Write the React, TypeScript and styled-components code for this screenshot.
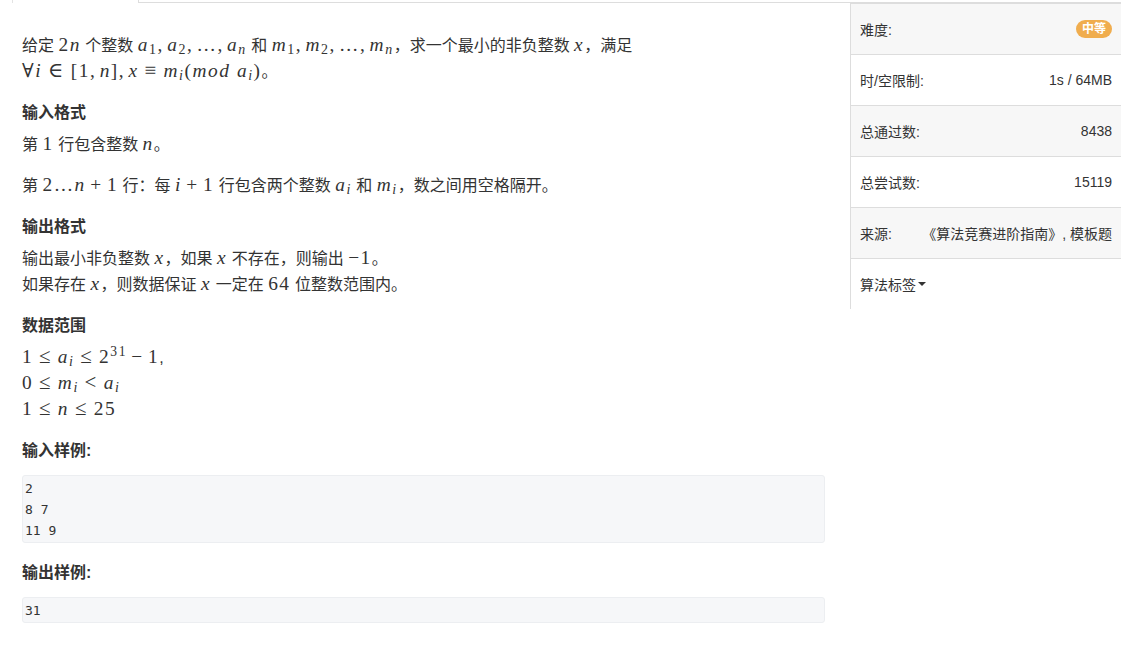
import styled, { createGlobalStyle } from "styled-components";

const GlobalStyle = createGlobalStyle`
  body {
    margin: 0;
    background: #fff;
    color: #333;
    font-family: "Liberation Sans", "Noto Sans CJK SC", sans-serif;
  }
`;

const Page = styled.div`
  display: flex;
  align-items: flex-start;
  width: 1129px;
`;

const Main = styled.main`
  width: 850px;
  flex-shrink: 0;
`;

const TabBar = styled.div`
  display: flex;
  height: 3px;
  padding-left: 12px;
`;

const ActiveTab = styled.div`
  width: 125px;
  height: 3px;
  border-left: 1px solid #e3e3e3;
  border-right: 1px solid #ddd;
`;

const TabLine = styled.div`
  flex: 1;
  height: 2px;
  border-bottom: 1px solid #ddd;
`;

const Content = styled.div`
  padding: 30px 25px 20px 22px;
  font-size: 16px;
  line-height: 26px;
`;

const Para = styled.p`
  margin: 0 0 15px;
`;

const Heading = styled.h4<{ $gap?: number }>`
  margin: 0 0 ${({ $gap }) => $gap ?? 6}px;
  font-size: 16px;
  font-weight: 700;
  line-height: 26px;
`;

const Sample = styled.pre`
  margin: 0 0 17px;
  padding: 2px 2px 1px;
  border: 1px solid #eceef1;
  border-radius: 3px;
  background: #f6f7f9;
  color: #333;
  font-family: "DejaVu Sans Mono", "Liberation Mono", monospace;
  font-size: 13px;
  line-height: 21px;
  white-space: pre;
`;

// math (stands in for KaTeX)
const M = styled.span`
  font-family: "Liberation Serif", "DejaVu Serif", serif;
  font-size: 1.21em;
  line-height: 1;
  letter-spacing: 0.08em;
  white-space: nowrap;
`;

const V = styled.i`
  font-style: italic;
`;

const Sub = styled.sub`
  font-size: 0.72em;
  line-height: 0;
  vertical-align: -0.22em;
`;

const Sup = styled.sup`
  font-size: 0.7em;
  line-height: 0;
  vertical-align: 0.5em;
`;

const Rel = styled.span`
  margin: 0 0.2778em;
  font-size: 1.08em;
`;

const Bin = styled.span`
  margin: 0 0.2222em;
`;

const Punct = styled.span`
  margin-right: 0.1667em;
`;

const Sidebar = styled.aside`
  width: 270px;
  flex-shrink: 0;
  margin-top: 2px;
  border-top: 2px solid #ddd;
  border-left: 1px solid #ddd;
  font-size: 14px;
  color: #333;
`;

const InfoRow = styled.div<{ $shade?: boolean }>`
  display: flex;
  align-items: center;
  justify-content: space-between;
  height: 50px;
  padding: 0 9px;
  background: ${({ $shade }) => ($shade ? "#f7f7f7" : "#fff")};

  & + & {
    border-top: 1px solid #ddd;
  }
`;

const Badge = styled.span`
  padding: 0 6px;
  border-radius: 9px;
  background: #f0ad4e;
  color: #fff;
  font-size: 12px;
  font-weight: 700;
  line-height: 18px;
`;

const TagToggle = styled.span`
  display: inline-flex;
  align-items: center;
  cursor: pointer;
`;

const Caret = styled.span`
  display: inline-block;
  width: 0;
  height: 0;
  margin-left: 2px;
  border-top: 4px solid #333;
  border-left: 4px solid transparent;
  border-right: 4px solid transparent;
`;

const Ai = () => (
  <>
    <V>a</V>
    <Sub>
      <V>i</V>
    </Sub>
  </>
);

const Mi = () => (
  <>
    <V>m</V>
    <Sub>
      <V>i</V>
    </Sub>
  </>
);

export default function App() {
  return (
    <Page>
      <GlobalStyle />
      <Main>
        <TabBar>
          <ActiveTab />
          <TabLine />
        </TabBar>

        <Content>
          <Para>
            给定 <M>2<V>n</V></M> 个整数{" "}
            <M>
              <V>a</V>
              <Sub>1</Sub>
              <Punct>,</Punct>
              <V>a</V>
              <Sub>2</Sub>
              <Punct>,</Punct>…<Punct>,</Punct>
              <V>a</V>
              <Sub>
                <V>n</V>
              </Sub>
            </M>{" "}
            和{" "}
            <M>
              <V>m</V>
              <Sub>1</Sub>
              <Punct>,</Punct>
              <V>m</V>
              <Sub>2</Sub>
              <Punct>,</Punct>…<Punct>,</Punct>
              <V>m</V>
              <Sub>
                <V>n</V>
              </Sub>
            </M>
            ，求一个最小的非负整数 <M><V>x</V></M>，满足
            <br />
            <M>
              ∀<V>i</V>
              <Rel>∈</Rel>[1<Punct>,</Punct>
              <V>n</V>]<Punct>,</Punct>
              <V>x</V>
              <Rel>≡</Rel>
              <Mi />(<V>mod</V> <Ai />)
            </M>
            。
          </Para>

          <Heading>输入格式</Heading>
          <Para>
            第 <M>1</M> 行包含整数 <M><V>n</V></M>。
          </Para>
          <Para>
            第{" "}
            <M>
              2…<V>n</V>
              <Bin>+</Bin>1
            </M>{" "}
            行：每{" "}
            <M>
              <V>i</V>
              <Bin>+</Bin>1
            </M>{" "}
            行包含两个整数 <M><Ai /></M> 和 <M><Mi /></M>，数之间用空格隔开。
          </Para>

          <Heading>输出格式</Heading>
          <Para>
            输出最小非负整数 <M><V>x</V></M>，如果 <M><V>x</V></M> 不存在，则输出{" "}
            <M>−1</M>。
            <br />
            如果存在 <M><V>x</V></M>，则数据保证 <M><V>x</V></M> 一定在 <M>64</M>{" "}
            位整数范围内。
          </Para>

          <Heading>数据范围</Heading>
          <Para>
            <M>
              1<Rel>≤</Rel>
              <Ai />
              <Rel>≤</Rel>2<Sup>31</Sup>
              <Bin>−</Bin>1
            </M>
            ,
            <br />
            <M>
              0<Rel>≤</Rel>
              <Mi />
              <Rel>&lt;</Rel>
              <Ai />
            </M>
            <br />
            <M>
              1<Rel>≤</Rel>
              <V>n</V>
              <Rel>≤</Rel>25
            </M>
          </Para>

          <Heading $gap={11}>输入样例:</Heading>
          <Sample>{"2\n8 7\n11 9"}</Sample>

          <Heading $gap={11}>输出样例:</Heading>
          <Sample>31</Sample>
        </Content>
      </Main>

      <Sidebar>
        <InfoRow $shade>
          <span>难度:</span>
          <Badge>中等</Badge>
        </InfoRow>
        <InfoRow>
          <span>时/空限制:</span>
          <span>1s / 64MB</span>
        </InfoRow>
        <InfoRow $shade>
          <span>总通过数:</span>
          <span>8438</span>
        </InfoRow>
        <InfoRow>
          <span>总尝试数:</span>
          <span>15119</span>
        </InfoRow>
        <InfoRow $shade>
          <span>来源:</span>
          <span>《算法竞赛进阶指南》, 模板题</span>
        </InfoRow>
        <InfoRow>
          <TagToggle>
            算法标签
            <Caret />
          </TagToggle>
        </InfoRow>
      </Sidebar>
    </Page>
  );
}
